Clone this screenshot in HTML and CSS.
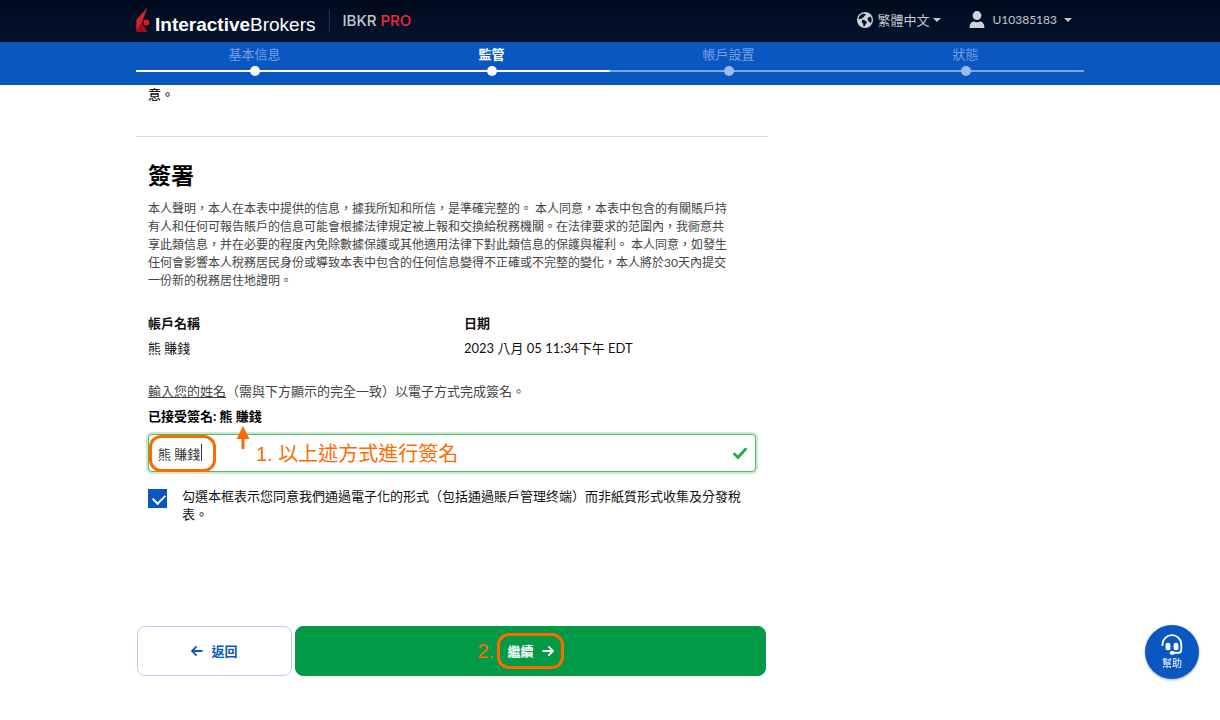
FILE: index.html
```html
<!DOCTYPE html>
<html lang="zh-Hant">
<head>
<meta charset="utf-8">
<meta name="viewport" content="width=device-width, initial-scale=1">
<title>Interactive Brokers</title>
<link rel="stylesheet" href="styles.css">
</head>
<body>
<header class="topbar">
  <div class="container topbar-row">
    <div class="brand">
      <svg class="brand-mark" viewBox="0 0 14 26" aria-hidden="true">
        <path d="M11.4 0.3 L6.4 14.4 L0.4 24.8 V12.8 Z" fill="#d9202c"/>
        <path d="M5.4 15.6 L11.6 25 H0.4 V24.4 Z" fill="#a30d1b"/>
        <circle cx="10.4" cy="15.6" r="3" fill="#e8131f"/>
      </svg>
      <span class="brand-name"><strong>Interactive</strong>Brokers</span>
      <span class="brand-plan">IBKR <em>PRO</em></span>
    </div>
    <nav class="tools">
      <button type="button" class="tool">
        <svg class="globe" viewBox="0 0 16 16" aria-hidden="true">
          <circle cx="8" cy="8" r="8" fill="#ced2da"/>
          <path d="M6.4 1.4 L8.4 2 L8.8 3 L7.4 4 L6.6 5.2 L5 6 L4.8 7.2 L3.6 6.6 L2.2 7.2 L1.4 6.4 C2 3.8 4 1.9 6.4 1.4 Z M5 8 L7 7.8 L8.8 9.2 L10 10 L9.2 11.8 L8 13.2 L7.2 14.8 L6.4 14 L6.2 11.8 L4.8 10.4 Z M11.6 5.2 L13.6 4.6 L14.7 7 L14.6 9.4 L13.2 11.2 L12.2 9.6 L10.8 8.6 L10.6 6.6 Z" fill="#061428"/>
        </svg>
        <span>繁體中文</span><i class="caret"></i>
      </button>
      <button type="button" class="tool account">
        <svg class="user" viewBox="0 0 16 18" aria-hidden="true">
          <ellipse cx="8" cy="4.6" rx="4.4" ry="4.5" fill="#ced2da"/>
          <path d="M0.5 17 C0.5 12.5 3 10.5 5 10.5 Q8 11.8 11 10.5 C13 10.5 15.5 12.5 15.5 17 Z" fill="#ced2da"/>
        </svg>
        <span>U10385183</span><i class="caret"></i>
      </button>
    </nav>
  </div>
</header>
<div class="progress">
  <ol class="container steps">
    <li class="step done">基本信息</li>
    <li class="step current">監管</li>
    <li class="step">帳戶設置</li>
    <li class="step">狀態</li>
  </ol>
</div>
<main class="container">
  <form class="form">
    <p class="tail">意。</p>
    <section class="sign">
      <h2>簽署</h2>
      <p class="declaration">本人聲明，本人在本表中提供的信息，據我所知和所信，是準確完整的。 本人同意，本表中包含的有關賬戶持<br>有人和任何可報告賬戶的信息可能會根據法律規定被上報和交換給稅務機關。在法律要求的范圍內，我衕意共<br>享此類信息，并在必要的程度內免除數據保護或其他適用法律下對此類信息的保護與權利。 本人同意，如發生<br>任何會影響本人稅務居民身份或導致本表中包含的任何信息變得不正確或不完整的變化，本人將於30天內提交<br>一份新的稅務居住地證明。</p>
      <dl class="facts">
        <div><dt>帳戶名稱</dt><dd>熊 賺錢</dd></div>
        <div><dt>日期</dt><dd>2023 八月 05 11:34下午 EDT</dd></div>
      </dl>
      <p class="hint"><u>輸入您的姓名</u>（需與下方顯示的完全一致）以電子方式完成簽名。</p>
      <label class="sign-label" for="signature">已接受簽名: 熊 賺錢</label>
      <div class="field">
        <input id="signature" class="field-input" type="text" value="熊 賺錢">
        <span class="text-cursor"></span>
        <svg class="valid" viewBox="0 0 14 12" aria-hidden="true"><path d="M1.5 6.5 L5 10 L12.5 1.8" fill="none" stroke="#28a745" stroke-width="2.8" stroke-linecap="round"/></svg>
        <span class="ring ring-name"></span>
        <svg class="arrow-up" viewBox="0 0 14 23" aria-hidden="true"><path d="M7 0 L13.5 13 H0.5 Z" fill="#ff6a00"/><path d="M7 12 V23" stroke="#ff6a00" stroke-width="3"/></svg>
        <span class="note">1. 以上述方式進行簽名</span>
      </div>
      <div class="consent">
        <input id="consent" class="check" type="checkbox" checked>
        <label for="consent">勾選本框表示您同意我們通過電子化的形式（包括通過賬戶管理终端）而非紙質形式收集及分發稅表。</label>
      </div>
    </section>
    <div class="actions">
      <button type="button" class="btn back">
        <svg class="arrow" viewBox="0 0 12 12" aria-hidden="true"><path d="M11.5 6 H1 M5.6 1.4 L1 6 L5.6 10.6" fill="none" stroke="currentColor" stroke-width="1.8"/></svg>
        返回
      </button>
      <button type="button" class="btn next">
        <span class="next-label">繼續
          <svg class="arrow" viewBox="0 0 12 12" aria-hidden="true"><path d="M0.5 6 H11 M6.4 1.4 L11 6 L6.4 10.6" fill="none" stroke="currentColor" stroke-width="1.8"/></svg>
          <span class="ring ring-next"></span>
          <span class="note-two">2.</span>
        </span>
      </button>
    </div>
  </form>
</main>
<button type="button" class="help">
  <svg class="headset" viewBox="0 0 22 22" aria-hidden="true">
    <path d="M1.5 12 V10.5 A9.2 9.2 0 0 1 20.3 10.5 V15.5 Q20.3 18.8 17 18.8 H12" fill="none" stroke="#fff" stroke-width="1.8"/>
    <rect x="4.6" y="8.8" width="4.8" height="7.4" rx="2" fill="#fff"/>
    <rect x="12.6" y="8.8" width="4.8" height="7.4" rx="2" fill="#fff"/>
    <rect x="8.8" y="17" width="5" height="3.8" rx="1.8" fill="#fff"/>
  </svg>
  幫助
</button>
</body>
</html>
```
FILE: styles.css
```css
* { box-sizing: border-box; }
body {
  margin: 0;
  background: #fff;
  color: #111;
  font: 13px/18px Lato, "Noto Sans CJK TC", sans-serif;
}
button, input { font: inherit; }
p, h2, dl, dd, ol { margin: 0; padding: 0; }
.container { width: 100%; max-width: 948px; margin: 0 auto; }

.topbar { background: linear-gradient(#010a1c, #03142f); }
.topbar-row { display: flex; justify-content: space-between; height: 42px; }
.brand { display: flex; align-items: flex-start; padding-top: 7px; }
.brand-mark { width: 14px; height: 26px; }
.brand-name {
  margin: 6px 13px 0 5px;
  color: #fff;
  font: 19px/24px "Liberation Sans", Arial, sans-serif;
}
.brand-plan {
  margin-top: 2px;
  padding-left: 13px;
  border-left: 1px solid #26344d;
  color: #c3c8d1;
  font: 500 15px/24px Inter, sans-serif;
}
.brand-plan em { color: #f0283c; font-style: normal; }
.tools { display: flex; align-items: center; gap: 28px; padding: 0 12px 2px 0; }
.tool {
  display: flex;
  align-items: center;
  gap: 4px;
  padding: 0;
  border: 0;
  background: none;
  color: #c3c8d1;
}
.account { gap: 7px; font-size: 12px; }
.globe { width: 16px; height: 16px; }
.user { width: 16px; height: 18px; }
.caret {
  border: 4px solid transparent;
  border-top-color: currentColor;
  border-bottom: 0;
}

.progress { background: #0a57c2; border-top: 1px solid #1b4c94; }
.steps { display: grid; grid-template-columns: repeat(4, 1fr); height: 42px; list-style: none; }
.step {
  position: relative;
  padding-top: 2px;
  color: #799fe4;
  text-align: center;
}
.step::before, .step::after { content: ""; position: absolute; background: #9dbaf0; }
.step::before { left: 0; right: 0; top: 27px; height: 2px; background: #7da4e8; }
.step::after { left: calc(50% - 5px); top: 23px; width: 10px; height: 10px; border-radius: 50%; }
.step.done::before, .step.done::after,
.step.current::before, .step.current::after { background: #fff; }
.step.current { color: #fff; font-weight: 700; }

.form { width: 66.6667%; }
.tail { padding: 0 12px 33px; border-bottom: 1px solid #dcdcdc; font-weight: 500; }
.sign { padding: 23px 12px 0; }
.sign h2 { margin-bottom: 10px; color: #000; font-size: 23px; line-height: 30px; font-weight: 700; }
.declaration { color: #444; font-size: 12px; white-space: nowrap; }
.facts { display: flex; gap: 24px; margin: 24px 0 25px; }
.facts div { flex: 1; }
.facts dt { margin-bottom: 7px; font-weight: 700; }
.hint { margin-bottom: 7px; color: #444; }
.sign-label { display: block; margin-bottom: 9px; color: #000; font-weight: 700; }
.field { position: relative; }
.field-input {
  display: block;
  width: 100%;
  height: 38px;
  padding: 0 36px 0 9px;
  border: 1px solid #4dbb66;
  border-radius: 4px;
  outline: 0;
  box-shadow: 0 0 0 2px #cbe9d1;
  color: #333;
}
.text-cursor { position: absolute; left: 53px; top: 10px; width: 1px; height: 17px; background: #333; }
.valid { position: absolute; right: 9px; top: 13px; width: 14px; height: 13px; }
.ring { position: absolute; border: 3px solid #ff6a00; }
.ring-name { left: 1px; top: 1px; width: 67px; height: 37px; border-radius: 12px; }
.arrow-up { position: absolute; left: 88px; top: -8px; width: 14px; height: 23px; }
.note {
  position: absolute;
  left: 108px;
  top: 6px;
  color: #ff6a00;
  font: 20px/28px "Liberation Sans", "Noto Sans CJK TC", sans-serif;
}
.consent { display: flex; gap: 15px; margin-top: 15px; }
.check {
  flex: none;
  width: 19px;
  height: 19px;
  margin: 2px 0 0;
  appearance: none;
  background: #0a57c2;
}
.check:checked::before {
  content: "";
  display: block;
  width: 10px;
  height: 6px;
  margin: 5px;
  border: solid #fff;
  border-width: 0 0 2px 2px;
  transform: rotate(-45deg);
}
.actions { display: flex; gap: 3px; margin-top: 103px; padding: 0 2px 0 1px; }
.btn {
  display: flex;
  align-items: center;
  justify-content: center;
  gap: 8px;
  height: 50px;
  border: 1px solid #b9cdf0;
  border-radius: 8px;
  font-weight: 700;
}
.back { flex: 0 0 155px; background: #fff; color: #0a57c2; }
.next { flex: 1; border-color: #029a46; background: #029a46; color: #fff; }
.next-label { position: relative; display: flex; align-items: center; gap: 8px; }
.arrow { width: 12px; height: 12px; }
.ring-next { left: -10px; top: -9px; width: 67px; height: 36px; border-radius: 12px; }
.note-two {
  position: absolute;
  left: -30px;
  top: -5px;
  color: #ff6a00;
  font: 20px/28px "Liberation Sans", sans-serif;
}

.help {
  position: fixed;
  right: 21px;
  bottom: 41px;
  display: flex;
  flex-direction: column;
  align-items: center;
  justify-content: center;
  width: 54px;
  height: 54px;
  padding: 0;
  border: 0;
  border-radius: 50%;
  background: #0a57c2;
  box-shadow: 0 1px 3px #aab4c5;
  color: #fff;
  font-size: 10px;
  line-height: 14px;
}
.headset { width: 22px; height: 22px; }
```
